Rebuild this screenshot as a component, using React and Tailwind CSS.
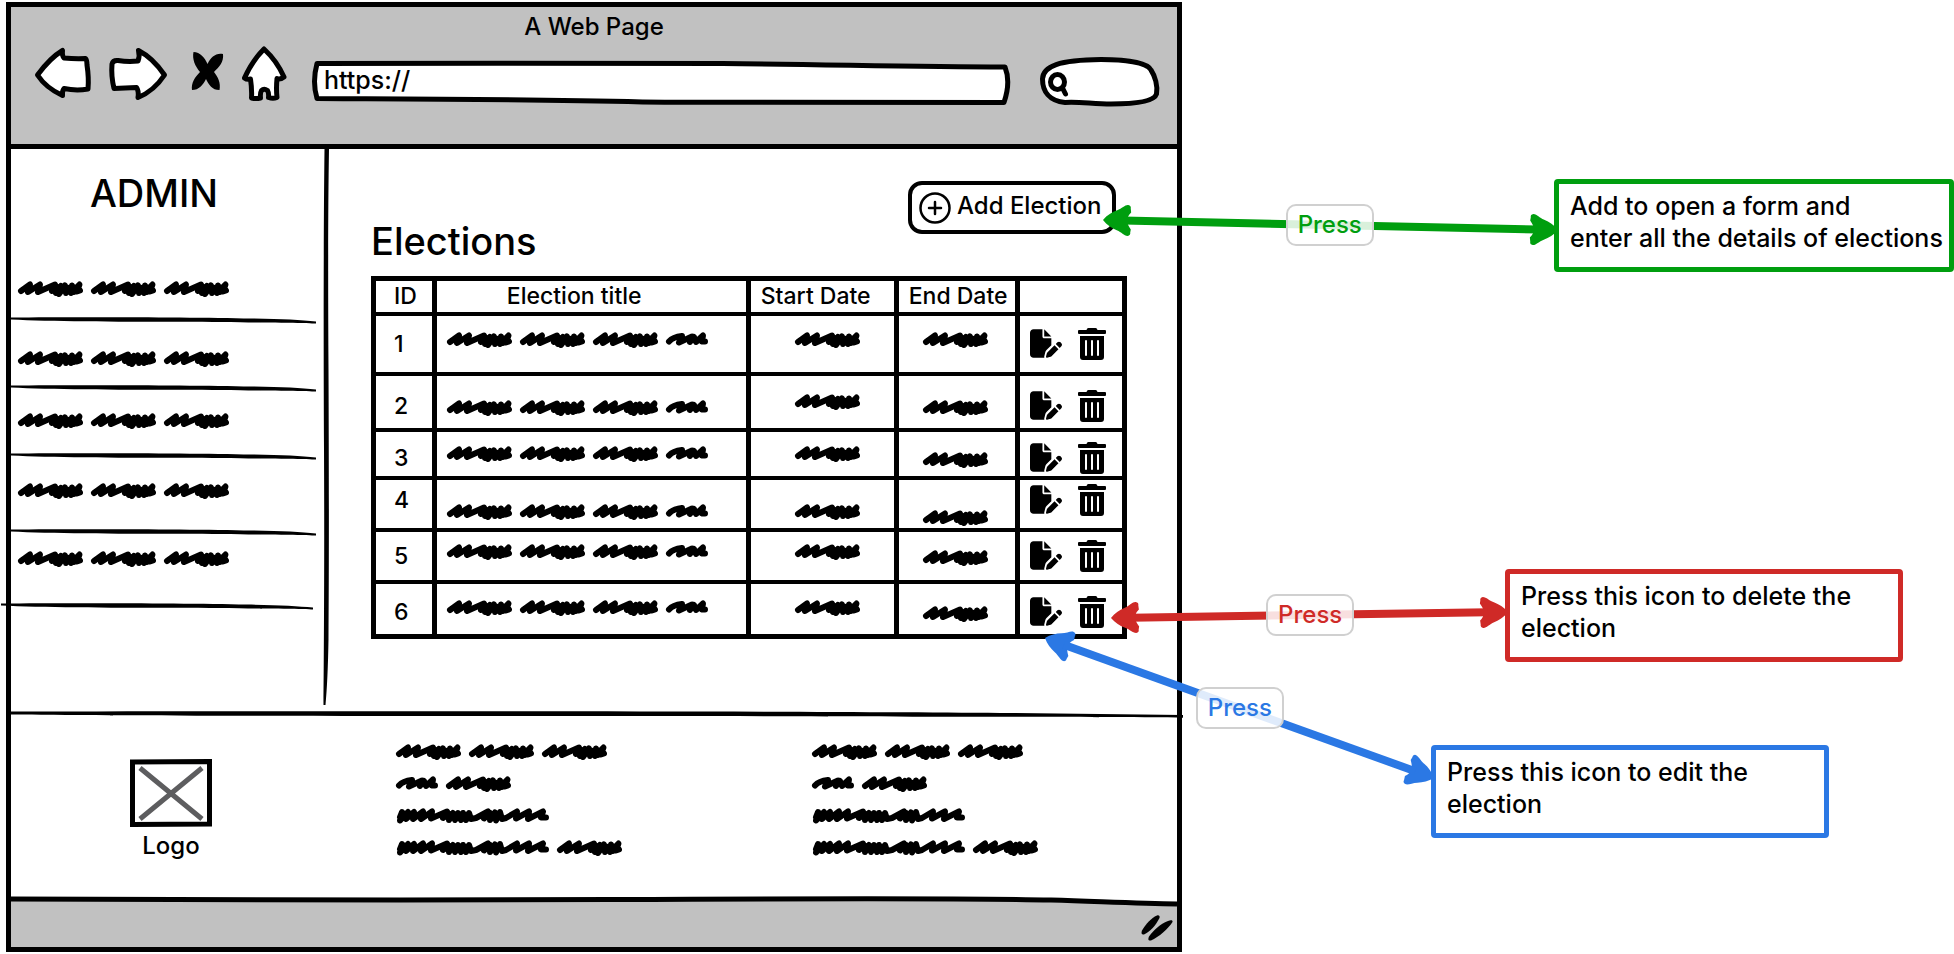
import React from "react";
import { FaTrashAlt } from "react-icons/fa";
import { FaFilePen } from "react-icons/fa6";

const SCRIBBLES = {
  short: {
    width: 42,
    path: "M3 9.5Q7 5 16 4L13 10.500L26 4.500L24 10L28 5L30 10L37 3.500L36 9.500L39 9.500",
  },
  medium: {
    width: 65,
    path: "M3 10L12 3.500L10 11L22 3.500L20 11L37 3.500L34 10L39 6L38 12L43 5L41 13L44 9L47 4.500L48 12L51 7L53 12L54 4.500L56 11L57 8L61.500 3.500L59 10.500L62 9.500",
  },
  long: {
    width: 153,
    path: "M4 9L6 4L4 12.500L9 7L12 4L10 11L18 4L17 11L27 3.500L25 11L36 3.500L35 10.500L51 3.500L47 10L53 6L53 12L57 5L59 12L62 5L65 12L67 5L70 12L73 5L75 11L80 10L92 3.500L88 10.500L94 5L94 12L99 4.500L100 12.500L104 4L106 11L110 10L121 3.500L120 10.500L133 3.500L132 11L147 3.500L145 9.500L150 9.500",
  },
};

function Scribble({ words }) {
  return (
    <span className="flex gap-2" aria-hidden="true">
      {words.map((word, i) => (
        <svg
          key={i}
          width={SCRIBBLES[word].width}
          height="14"
          viewBox={`0 0 ${SCRIBBLES[word].width} 14`}
          fill="none"
          stroke="black"
          strokeWidth="6"
          strokeLinecap="round"
          strokeLinejoin="round"
          className="block shrink-0 overflow-visible"
        >
          <path d={SCRIBBLES[word].path} />
        </svg>
      ))}
    </span>
  );
}

function BrowserBar() {
  const icon = "block overflow-visible fill-white stroke-black stroke-[5]";
  return (
    <header className="border-b-5 border-black bg-[#c1c1c1] pt-2 pb-[38px]">
      <h1 className="text-center text-2xl leading-6 font-medium">A Web Page</h1>
      <div className="mt-[7px] flex h-[60px] gap-4 pr-[18px] pl-[23px]">
        <button type="button" aria-label="Back" className="shrink-0">
          <svg width="58" height="60" viewBox="0 0 58 60" strokeLinejoin="round" strokeLinecap="round" className={icon}>
            <path d="M3.500 29Q16 12 28.500 4.500Q28 10 30 12Q41 13 51.500 12.500Q53 14 53 19Q55 32 54 43Q42 45 30 42.500Q28 45 28.500 49.500Q12 42 3.500 29Z" />
          </svg>
        </button>
        <button type="button" aria-label="Forward" className="shrink-0">
          <svg width="60" height="60" viewBox="0 0 60 60" strokeLinejoin="round" strokeLinecap="round" className={icon}>
            <path d="M4 18Q5 14 10 14.500Q20 16 30 15Q32 10 30.500 4.500Q45 12 56.500 29Q46 45 30 51.500Q31 45 28.500 41.500Q17 42 6 42.500Q3 30 4 18Z" />
          </svg>
        </button>
        <button type="button" aria-label="Stop" className="shrink-0">
          <svg width="40" height="60" viewBox="0 0 40 60" className="block">
            <path d="M9.500 6C16 6 21 12 23.500 18C27 11 32 6.500 39 8C40 16 35 21 30 26C34 31 37 37 35.500 44C28 44 25 39 22 33C19 39 15 44 8 44C7 37 11 31 16 26C11 20 8 13 9.500 6Z" />
          </svg>
        </button>
        <button type="button" aria-label="Home" className="shrink-0">
          <svg width="50" height="60" viewBox="0 0 50 60" strokeLinejoin="round" strokeLinecap="round" className={icon}>
            <path d="M24 3Q37 15 44 31Q40 34 37 32.500Q36 43 37 51.500Q33 53 28.500 51.500Q29 47 27.500 44.500Q24 42 21.500 44.500Q20 47 20.500 52Q16 53 11.500 52Q12 43 10.500 33Q7 34 4.500 32Q12 15 24 3Z" />
          </svg>
        </button>
        <div className="relative ml-1.5 min-w-0 flex-1 pt-2">
          <svg
            viewBox="0 0 698 60"
            preserveAspectRatio="none"
            strokeLinejoin="round"
            className="absolute inset-0 h-full w-full overflow-visible fill-white stroke-black stroke-[5]"
          >
            <path d="M5 17.500C120 17 330 17.500 410 17.500C520 18.500 600 21 692 21Q698 36 691 56.500C500 57 420 57 330 56C200 53 80 53 5 52.500Q0 36 5 17.500Z" />
          </svg>
          <input
            type="text"
            aria-label="Address"
            defaultValue="https://"
            className="relative block h-[52px] w-full bg-transparent px-3 text-[25px] font-medium outline-none"
          />
        </div>
        <div className="relative ml-3 w-[120px] shrink-0">
          <svg viewBox="0 0 120 60" className="absolute inset-0 h-full w-full overflow-visible" fill="none" stroke="black">
            <path
              d="M26 56.500C10 55 3.500 45 3.500 33C4 20 20 14 62 13.500C84 13.500 108 16 112 24C116 30 119 40 117.500 48C115 56 95 58 72 58C54 58 40 55.500 26 56.500Z"
              fill="white"
              strokeWidth="5"
              strokeLinejoin="round"
            />
            <ellipse cx="18.500" cy="36" rx="7" ry="7.500" strokeWidth="5" />
            <path d="M23.500 42L26.500 48" strokeWidth="5" strokeLinecap="round" />
          </svg>
          <input
            type="search"
            aria-label="Search"
            className="relative block h-full w-full bg-transparent pl-9 text-2xl outline-none"
          />
        </div>
      </div>
    </header>
  );
}

const NAV_ITEMS = [
  { id: 1, box: "h-[54px] pt-3" },
  { id: 2, box: "h-17 pt-7" },
  { id: 3, box: "h-17 pt-5.5" },
  { id: 4, box: "h-19 pt-6" },
  { id: 5, box: "h-[74px] pt-4", wide: true },
];

function Sidebar() {
  return (
    <aside className="relative w-[318px] shrink-0 pt-6">
      <h2 className="pr-8 text-center text-[38px] leading-10 font-medium">ADMIN</h2>
      <nav className="mt-14">
        <ul>
          {NAV_ITEMS.map((item) => (
            <li key={item.id} className={`relative ${item.box}`}>
              <a href={`#section-${item.id}`} aria-label={`Section ${item.id}`} className="block pl-[7px]">
                <Scribble words={["medium", "medium", "medium"]} />
              </a>
              <svg
                viewBox="0 0 305 8"
                preserveAspectRatio="none"
                className={
                  item.wide
                    ? "absolute bottom-0 -left-2.5 h-2 w-[312px] overflow-visible"
                    : "absolute bottom-0 left-0 h-2 w-[305px] overflow-visible"
                }
              >
                <path d="M0 2.500C60 2 180 2 240 3.500C270 4 290 5 305 6.500L305 8.500C290 8 250 7.500 170 6.800C100 6.800 40 6.500 0 4.500Z" />
              </svg>
            </li>
          ))}
        </ul>
      </nav>
      <svg viewBox="0 0 8 556" preserveAspectRatio="none" className="absolute top-0 right-0 h-[556px] w-2">
        <path d="M3.500 0L8 0C7 60 7 140 7.500 220C8 330 8 420 7.500 490C7 520 6 540 4.500 556L2.500 556C3 500 3.500 400 3 300C2.500 200 2.500 80 3.500 0Z" />
      </svg>
    </aside>
  );
}

const ROWS = [
  { id: 1, height: "h-[60px]", idPad: "pt-4", title: "pt-4", start: "pt-4", end: "pt-4", actions: "pt-3" },
  { id: 2, height: "h-14", idPad: "pt-4.5", title: "pt-6", start: "pt-4.5", end: "pt-6", actions: "pt-3.5" },
  { id: 3, height: "h-12", idPad: "pt-3.5", title: "pt-3.5", start: "pt-3.5", end: "pt-5", actions: "pt-2.5" },
  { id: 4, height: "h-13", idPad: "pt-2", title: "pt-6", start: "pt-6", end: "pt-7.5", actions: "pt-1" },
  { id: 5, height: "h-13", idPad: "pt-3", title: "pt-3", start: "pt-3", end: "pt-4.5", actions: "pt-2" },
  { id: 6, height: "h-[55px]", idPad: "pt-4", title: "pt-4", start: "pt-4", end: "pt-5.5", actions: "pt-3" },
];

function ElectionsTable() {
  const head =
    "border-x-5 border-y-4 border-black p-0 text-left text-[23px] leading-6 font-medium whitespace-nowrap";
  const cell = "border-x-5 border-y-4 border-black p-0 align-top";
  return (
    <table className="mt-[15px] w-full table-fixed border-collapse border-5 border-black">
      <colgroup>
        <col className="w-[8.100%]" />
        <col className="w-[41.800%]" />
        <col className="w-[19.700%]" />
        <col className="w-[16.200%]" />
        <col className="w-[14.200%]" />
      </colgroup>
      <thead>
        <tr className="h-[35px]">
          <th scope="col" className={`${head} pl-[18px]`}>ID</th>
          <th scope="col" className={`${head} pl-[70px]`}>Election title</th>
          <th scope="col" className={`${head} pl-2.5`}>Start Date</th>
          <th scope="col" className={`${head} pl-2.5`}>End Date</th>
          <td className={cell}></td>
        </tr>
      </thead>
      <tbody>
        {ROWS.map((row) => (
          <tr key={row.id} className={row.height}>
            <td className={cell}>
              <div className={`pl-[18px] text-[23px] leading-6 font-medium ${row.idPad}`}>{row.id}</div>
            </td>
            <td className={cell}>
              <div className={`pl-2.5 ${row.title}`}>
                <Scribble words={["medium", "medium", "medium", "short"]} />
              </div>
            </td>
            <td className={cell}>
              <div className={`pl-11 ${row.start}`}>
                <Scribble words={["medium"]} />
              </div>
            </td>
            <td className={cell}>
              <div className={`pl-6 ${row.end}`}>
                <Scribble words={["medium"]} />
              </div>
            </td>
            <td className={cell}>
              <div className={`-mb-2 flex gap-4 pl-2.5 ${row.actions}`}>
                <button type="button" aria-label={`Edit election ${row.id}`} className="flex h-8 w-8 items-center">
                  <FaFilePen size={29} className="w-8 shrink-0" />
                </button>
                <button type="button" aria-label={`Delete election ${row.id}`} className="flex h-8 w-7 items-center justify-center">
                  <FaTrashAlt size={32} className="shrink-0" />
                </button>
              </div>
            </td>
          </tr>
        ))}
      </tbody>
    </table>
  );
}

function Elections() {
  return (
    <main className="min-w-0 flex-1 pt-8 pr-[50px] pl-[42px]">
      <div className="flex items-start justify-between pr-[11px]">
        <h2 className="mt-10 text-[38px] leading-10 font-medium">Elections</h2>
        <button
          type="button"
          className="flex h-[53px] w-[208px] items-center gap-1.5 rounded-[14px] border-4 border-black pl-[7px] text-2xl leading-6 font-medium whitespace-nowrap"
        >
          <svg width="32" height="32" viewBox="0 0 32 32" fill="none" stroke="black" strokeWidth="2.500" strokeLinecap="round" className="shrink-0">
            <circle cx="16" cy="16" r="14.500" />
            <path d="M10 16H22M16 10V22" />
          </svg>
          <span className="pb-1">Add Election</span>
        </button>
      </div>
      <ElectionsTable />
    </main>
  );
}

const FOOTER_LINES = [
  ["medium", "medium", "medium"],
  ["short", "medium"],
  ["long"],
  ["long", "medium"],
];

function LinkColumn({ name }) {
  return (
    <ul className="flex flex-col gap-[18px] pt-[29px]">
      {FOOTER_LINES.map((words, i) => (
        <li key={i}>
          <a href={`#${name}-${i + 1}`} aria-label={`${name} link ${i + 1}`} className="block">
            <Scribble words={words} />
          </a>
        </li>
      ))}
    </ul>
  );
}

function Footer() {
  return (
    <footer className="relative grid min-h-[185px] grid-cols-[385fr_416fr_365fr] pt-1">
      <svg viewBox="0 0 1171 8" preserveAspectRatio="none" className="absolute top-0 left-0 h-2 w-[calc(100%+6px)]">
        <path d="M0 0.500C300 0 800 0 1000 2L1171 4L1171 6.800C1100 6 900 5.500 700 5C400 5 100 5 0 3.500Z" />
      </svg>
      <figure className="flex w-80 flex-col items-center pt-11">
        <svg width="82" height="68" viewBox="0 0 82 68" fill="none">
          <path d="M10 9L72 60M72 9L10 60" stroke="#5d5d5f" strokeWidth="5" />
          <path d="M2.500 3L79.500 2.500L79.500 65L2.500 65.500Z" stroke="black" strokeWidth="5" />
        </svg>
        <figcaption className="mt-[7px] text-2xl leading-6 font-medium">Logo</figcaption>
      </figure>
      <LinkColumn name="about" />
      <LinkColumn name="contact" />
    </footer>
  );
}

function StatusBar() {
  return (
    <div className="relative h-[51px]">
      <svg viewBox="0 0 1166 51" preserveAspectRatio="none" className="absolute inset-0 h-full w-full">
        <path d="M0 3C150 5 400 4 600 3.500C800 2.500 980 2.500 1040 4C1100 6 1130 7.500 1166 8V51H0Z" fill="#c1c1c1" />
        <path d="M0 3C150 5 400 4 600 3.500C800 2.500 980 2.500 1040 4C1100 6 1130 7.500 1166 8" fill="none" stroke="black" strokeWidth="5" />
      </svg>
      <svg width="32" height="26" viewBox="0 0 32 26" className="absolute right-1 bottom-1.5">
        <path d="M16 0.500C18 0 19 1 18.500 3C15 10 9 17 3 19.500C0.500 20 0 18 1 15.500C5 9 10 3 16 0.500Z" />
        <path d="M27 6C30 4.500 32 5 31.500 7C27 14 18 22 10 25.500C7 26 7 24 8 21.500C13 15 19 9 27 6Z" />
      </svg>
    </div>
  );
}

const HEAD =
  "M0 0C4 -5 9 -8 14 -10C19 -12 22 -16 25 -15.500Q28 -15 27.500 -12L28 -8Q26 -6 25 -4L25 4Q26 6 28 9L27.500 12Q28 15 25 15.500C21 15 19 12 14 10C9 8 4 5 0 0Z";

const ARROWS = [
  { color: "#009e0f", x1: 1103, y1: 220, x2: 1558, y2: 230 },
  { color: "#cf2a27", x1: 1111, y1: 618, x2: 1508, y2: 612 },
  { color: "#2b78e4", x1: 1045, y1: 638, x2: 1434, y2: 778 },
];

function Arrow({ color, x1, y1, x2, y2 }) {
  const length = Math.hypot(x2 - x1, y2 - y1);
  const angle = (Math.atan2(y2 - y1, x2 - x1) * 180) / Math.PI;
  return (
    <g transform={`translate(${x1} ${y1}) rotate(${angle})`} fill={color}>
      <path d={HEAD} />
      <path d={HEAD} transform={`translate(${length} 0) rotate(180)`} />
      <path d={`M20 0H${length - 20}`} stroke={color} strokeWidth="8" />
    </g>
  );
}

function PressLabel({ className }) {
  return (
    <span
      className={`absolute flex h-[42px] w-[88px] items-center justify-center rounded-[10px] border-2 border-[#d0d0d0] bg-white/85 text-2xl leading-6 font-medium ${className}`}
    >
      Press
    </span>
  );
}

function Note({ className, children }) {
  return (
    <p
      className={`ml-auto min-h-[93px] rounded-sm border-5 pt-1.5 pl-[11px] text-[25px] leading-8 font-medium whitespace-nowrap ${className}`}
    >
      {children}
    </p>
  );
}

export default function App() {
  return (
    <div className="relative flex min-h-screen items-start overflow-hidden bg-white pt-0.5 pl-1.5 font-['Inter',sans-serif] text-black">
      <div className="min-w-0 flex-[1166] border-5 border-black">
        <BrowserBar />
        <div className="flex min-h-[562px]">
          <Sidebar />
          <Elections />
        </div>
        <Footer />
        <StatusBar />
      </div>
      <aside className="min-w-0 flex-[772] pt-[177px]">
        <Note className="w-[400px] border-[#009e0f]">
          Add to open a form and
          <br />
          enter all the details of elections
        </Note>
        <Note className="mt-[297px] mr-[51px] w-[398px] border-[#cf2a27]">
          Press this icon to delete the
          <br />
          election
        </Note>
        <Note className="mt-[83px] mr-[125px] w-[398px] border-[#2b78e4]">
          Press this icon to edit the
          <br />
          election
        </Note>
      </aside>
      <svg
        viewBox="0 0 1954 954"
        preserveAspectRatio="none"
        className="pointer-events-none absolute top-0 left-0 h-[954px] w-full"
        aria-hidden="true"
      >
        {ARROWS.map((arrow) => (
          <Arrow key={arrow.color} {...arrow} />
        ))}
      </svg>
      <PressLabel className="top-[204px] left-[65.800%] text-[#009e0f]" />
      <PressLabel className="top-[594px] left-[64.800%] text-[#cf2a27]" />
      <PressLabel className="top-[687px] left-[61.200%] text-[#2b78e4]" />
    </div>
  );
}
